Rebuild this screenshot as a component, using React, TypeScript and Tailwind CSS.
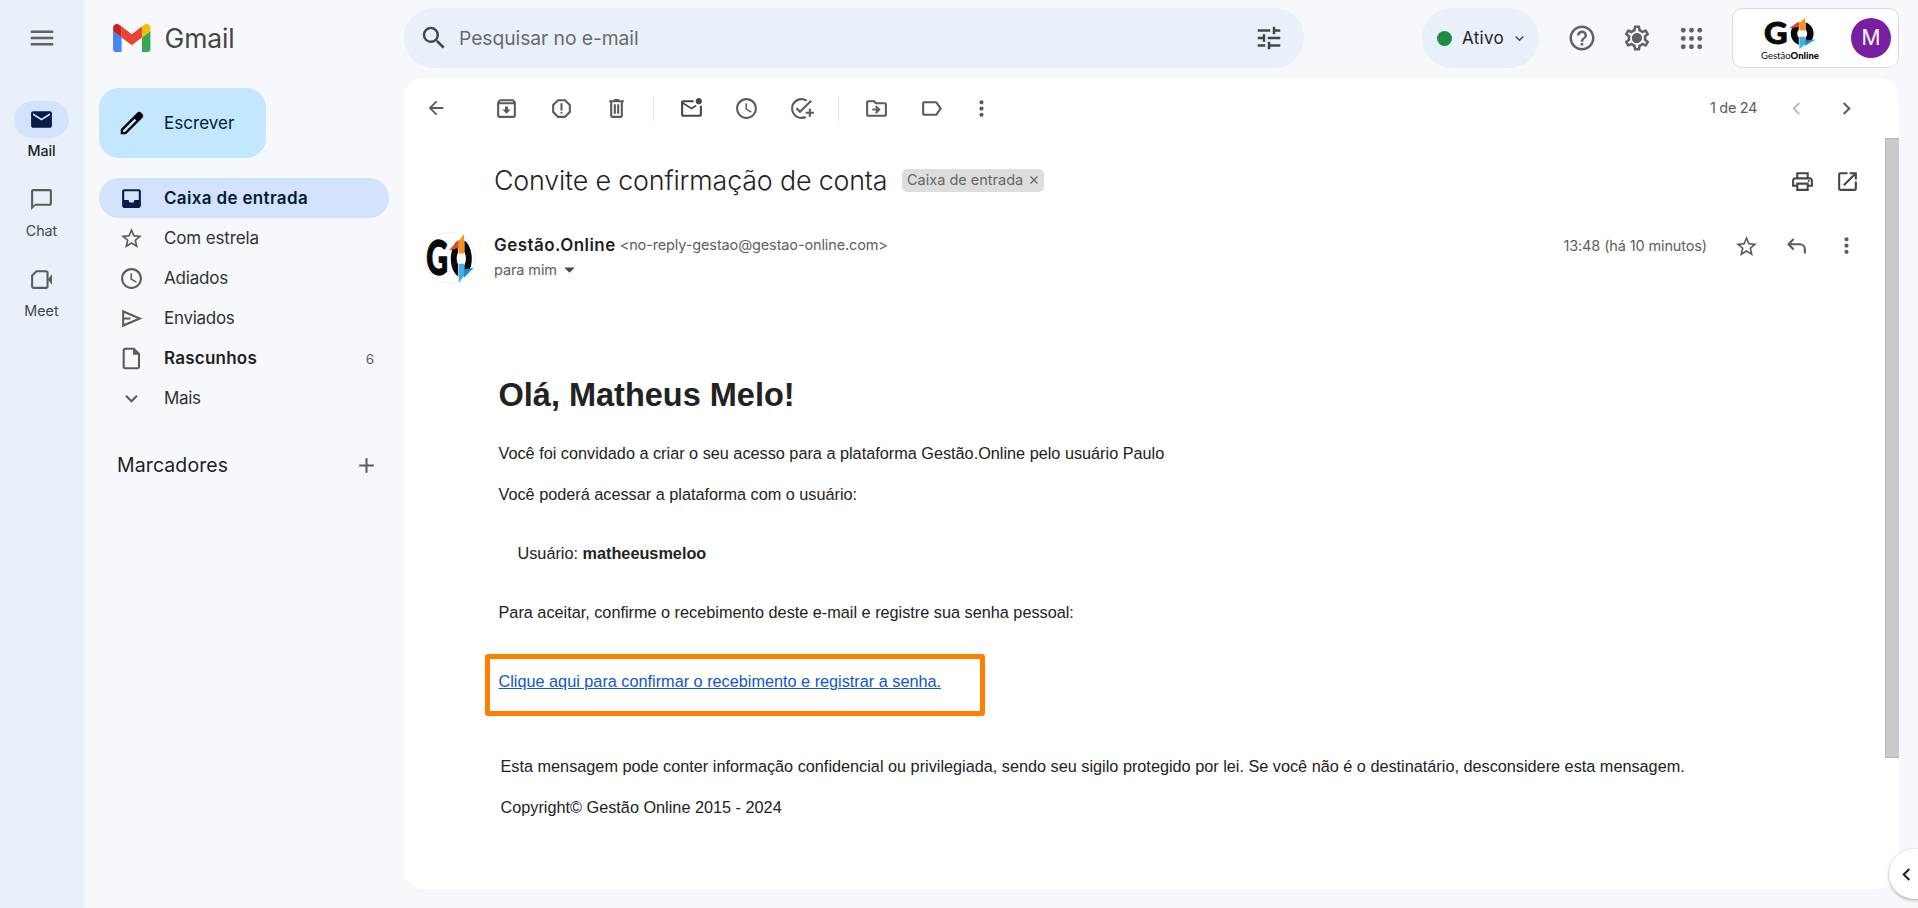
import type { ReactNode } from "react";
import {
  MdAccessTime,
  MdAdd,
  MdArrowBack,
  MdArrowDropDown,
  MdChatBubbleOutline,
  MdChevronLeft,
  MdChevronRight,
  MdExpandMore,
  MdHelpOutline,
  MdMail,
  MdMenu,
  MdMoreVert,
  MdOpenInNew,
  MdOutlineAddTask,
  MdOutlineArchive,
  MdOutlineDriveFileMove,
  MdOutlineLabel,
  MdOutlineMarkEmailUnread,
  MdOutlinePrint,
  MdOutlineReportGmailerrorred,
  MdOutlineSettings,
  MdSearch,
  MdStarBorder,
  MdTune,
} from "react-icons/md";

function GmailLogo() {
  return (
    <svg className="h-7 w-[37.5px]" viewBox="52 42 88 66">
      <path fill="#4285f4" d="M58 108h14V74L52 59v43c0 3.32 2.69 6 6 6" />
      <path fill="#34a853" d="M120 108h14c3.32 0 6-2.69 6-6V59l-20 15" />
      <path fill="#fbbc04" d="M120 48v26l20-15v-8c0-7.42-8.47-11.65-14.4-7.2" />
      <path fill="#ea4335" d="M72 74V48l24 18 24-18v26L96 92" />
      <path fill="#c5221f" d="M52 51v8l20 15V48l-5.6-4.2c-5.94-4.45-14.4-.22-14.4 7.2" />
    </svg>
  );
}

function GoMark({ className }: { className: string }) {
  return (
    <svg className={`overflow-visible ${className}`} viewBox="0 0 51 31" preserveAspectRatio="none">
      <text
        x="-0.9"
        y="26.1"
        fontFamily="Lato"
        fontWeight="900"
        fontSize="30.5"
        textLength="23.6"
        lengthAdjust="spacingAndGlyphs"
        fill="#060a0b"
        stroke="#060a0b"
        strokeWidth="0.9"
      >
        G
      </text>
      <ellipse cx="37.2" cy="15.5" rx="8.2" ry="8.6" fill="none" stroke="#060a0b" strokeWidth="6.4" />
      <path d="M33.8 0H40.6V31H33.8z" fill="#fff" />
      <path d="M34.4 3.6 23.6 10.4 34.4 8.8z" fill="#e8452c" />
      <path d="M34.4 4.4 40.2 0V12.4H34.4z" fill="#f7931e" />
      <path d="M34.4 18.8H40.2V26.6L34.4 31z" fill="#41b0e4" />
      <path d="M40.2 22.4 50.6 21.4 40.2 27.6z" fill="#1c8fd0" />
    </svg>
  );
}

function VideoIcon() {
  return (
    <svg className="h-[25px] w-[25px]" viewBox="0 0 24 24" fill="none" stroke="currentColor" strokeWidth="2">
      <path d="M7.2 4H16.2a1.6 1.6 0 0 1 1.6 1.6V18.4a1.6 1.6 0 0 1-1.6 1.6H4.6A1.6 1.6 0 0 1 3 18.4V8.2z" strokeLinejoin="round" />
      <path d="M18 12 22 7V17z" fill="currentColor" stroke="none" />
    </svg>
  );
}

function PencilIcon() {
  return (
    <svg className="h-[30px] w-[30px]" viewBox="0 0 24 24" fill="#000">
      <path d="M20.4 4.85 19.15 3.6c-.8-.8-2.05-.8-2.85 0L3 16.9V21h4.1L20.4 7.7c.8-.8.8-2.05 0-2.85zM6.3 19.1H4.9v-1.4l9.2-9.2 1.4 1.4z" />
    </svg>
  );
}

function InboxIcon() {
  return (
    <svg className="h-[25px] w-[25px]" viewBox="0 0 24 24" fill="currentColor">
      <path d="M19 3H5a2 2 0 0 0-2 2v14c0 1.1.9 2 2 2h14a2 2 0 0 0 2-2V5a2 2 0 0 0-2-2zm0 10.5h-4.2L14 15.8h-4l-.8-2.3H5V5h14z" />
    </svg>
  );
}

function SendIcon() {
  return (
    <svg className="h-[25px] w-[25px]" viewBox="0 0 24 24" fill="none" stroke="currentColor" strokeWidth="2">
      <path d="M4 5.2V18.8L20 12z" />
      <path d="M4 12H11" />
    </svg>
  );
}

function DraftIcon() {
  return (
    <svg className="h-[25px] w-[25px]" viewBox="0 0 24 24" fill="none" stroke="currentColor" strokeWidth="2">
      <path d="M5.9 2.6H14.2L19.2 7.6V20a1.4 1.4 0 0 1-1.4 1.4H5.9A1.4 1.4 0 0 1 4.5 20V4A1.4 1.4 0 0 1 5.9 2.6z" />
      <path d="M13.5 2.2V8.5H19.8z" fill="currentColor" stroke="none" />
    </svg>
  );
}

function TrashIcon() {
  return (
    <svg className="h-[25px] w-[25px]" viewBox="0 0 24 24" fill="none" stroke="currentColor" strokeWidth="2">
      <path d="M5 5H19M9.5 3.8H14.5" />
      <path d="M6.9 5V19a1 1 0 0 0 1 1H16.1a1 1 0 0 0 1-1V5" />
      <path d="M10.4 8V17M13.6 8V17" />
    </svg>
  );
}

function ReplyIcon() {
  return (
    <svg className="h-[25px] w-[25px]" viewBox="0 0 24 24" fill="none" stroke="currentColor" strokeWidth="2">
      <path d="M9.2 4.8 4.4 9.8 9.2 14.8" />
      <path d="M4.6 9.8H15.2A4.8 4.8 0 0 1 20 14.6V18.6" />
    </svg>
  );
}

function AppsIcon() {
  const steps = [4.1, 12, 19.9];
  return (
    <svg className="h-[25px] w-[25px]" viewBox="0 0 24 24" fill="currentColor">
      {steps.map((y) => steps.map((x) => <circle key={`${x}-${y}`} cx={x} cy={y} r="2.35" />))}
    </svg>
  );
}

function RailItem({ icon, label, active }: { icon: ReactNode; label: string; active?: boolean }) {
  return (
    <div className="flex h-20 flex-col items-center">
      <div
        className={
          active
            ? "flex h-[37px] w-[55px] items-center justify-center rounded-full bg-[#d3e3fd] text-[#041e49]"
            : "flex h-[37px] w-[55px] items-center justify-center text-[#5a5c5c]"
        }
      >
        {icon}
      </div>
      <div
        className={
          active
            ? "mt-1 text-[14.3px] leading-[18px] font-medium tracking-[-0.1px] text-[#1f1f1f]"
            : "mt-1 text-[14.3px] leading-[18px] text-[#444746]"
        }
      >
        {label}
      </div>
    </div>
  );
}

function NavItem({ icon, label, labelClass }: { icon: ReactNode; label: string; labelClass: string }) {
  return (
    <div className="flex h-10 items-center pl-5 text-[#5a5c5c]">
      {icon}
      <span className={`ml-5 pt-0.5 text-[17px] ${labelClass}`}>{label}</span>
    </div>
  );
}

function Cell({ children, className = "w-[55px]" }: { children: ReactNode; className?: string }) {
  return <div className={`flex shrink-0 items-center justify-center ${className}`}>{children}</div>;
}

function Divider() {
  return <div className="mr-2.5 ml-[9px] h-[25px] w-px bg-[#e3e5e8]" />;
}

export default function App() {
  return (
    <div className="relative flex h-[908px] w-[1918px] overflow-hidden bg-[#f6f8fc] font-[Inter,sans-serif] text-[#1f1f1f]">
      <aside className="flex w-[84px] shrink-0 flex-col items-center bg-[#e9f0fa] pr-px">
        <div className="flex h-[101px] items-start pt-[23px] text-[#5f6163]">
          <MdMenu size={30} />
        </div>
        <RailItem active icon={<MdMail size={25} />} label="Mail" />
        <RailItem icon={<MdChatBubbleOutline size={25} />} label="Chat" />
        <RailItem icon={<VideoIcon />} label="Meet" />
      </aside>

      <div className="flex w-80 shrink-0 flex-col pr-[15px] pl-[15px]">
        <div className="flex h-[76px] items-center pl-[14px]">
          <GmailLogo />
          <span className="ml-[14px] pt-0.5 text-[26.5px] tracking-[-0.14px] text-[#444746]">Gmail</span>
        </div>
        <div className="mt-3 flex h-[70px] w-[167px] items-center rounded-[20px] bg-[#c2e7ff] pl-[18px]">
          <PencilIcon />
          <span className="ml-[17px] pt-0.5 text-[17px] tracking-[0.05px] text-[#001d35]">Escrever</span>
        </div>
        <nav className="mt-5 flex flex-col">
          <div className="flex h-10 items-center rounded-full bg-[#d3e3fd] pl-5 text-[#041e49]">
            <InboxIcon />
            <span className="ml-5 pt-0.5 text-[17px] font-semibold tracking-[0.34px] text-[#001d35]">
              Caixa de entrada
            </span>
          </div>
          <NavItem icon={<MdStarBorder size={25} />} label="Com estrela" labelClass="tracking-[-0.15px] text-[#303234]" />
          <NavItem icon={<MdAccessTime size={25} />} label="Adiados" labelClass="tracking-[-0.2px] text-[#303234]" />
          <NavItem icon={<SendIcon />} label="Enviados" labelClass="tracking-[-0.28px] text-[#303234]" />
          <div className="flex h-10 items-center pr-[15px] pl-5 text-[#5a5c5c]">
            <DraftIcon />
            <span className="ml-5 pt-0.5 text-[17px] font-semibold tracking-[0.23px] text-[#1f1f1f]">Rascunhos</span>
            <span className="ml-auto pt-0.5 text-[13.5px]">6</span>
          </div>
          <NavItem icon={<MdExpandMore size={25} />} label="Mais" labelClass="tracking-[-0.37px] text-[#303234]" />
        </nav>
        <div className="mt-[35px] flex h-[25px] items-center justify-between pr-2.5 pl-[18px]">
          <span className="text-[19.5px] tracking-[0.1px]">Marcadores</span>
          <MdAdd size={25} className="text-[#5a5c5c]" />
        </div>
      </div>

      <div className="flex w-[1495px] shrink-0 flex-col">
        <header className="flex items-center pt-2">
          <div className="flex h-[60px] w-[900px] items-center rounded-full bg-[#e9f0fa] pr-5 pl-[15px] text-[#444746]">
            <MdSearch size={30} />
            <span className="ml-2.5 text-[19.3px] tracking-[-0.06px] text-[#686b6d]">Pesquisar no e-mail</span>
            <MdTune size={30} className="ml-auto" />
          </div>
          <div className="ml-[118px] flex h-[60px] w-[117px] items-center rounded-full bg-[#e9f0fa] pl-[15px]">
            <span className="h-[15px] w-[15px] rounded-full bg-[#1e8e3e]" />
            <span className="ml-2.5 pt-0.5 text-[17px] tracking-[0.3px]">Ativo</span>
            <MdExpandMore size={17} className="ml-[7px] text-[#444746]" />
          </div>
          <div className="ml-[15px] flex h-[60px] text-[#5f6368]">
            <Cell>
              <MdHelpOutline size={30} />
            </Cell>
            <Cell>
              <div className="relative flex">
                <MdOutlineSettings size={30} />
                <span className="absolute top-[10.5px] left-[10.5px] h-[9px] w-[9px] rounded-full bg-[#5f6368]" />
              </div>
            </Cell>
            <Cell>
              <AppsIcon />
            </Cell>
          </div>
          <div className="ml-[13px] flex h-[60px] w-[167px] items-center rounded-[10px] border border-[#dadce0] bg-white">
            <div className="ml-[27px] flex w-[60px] flex-col items-center">
              <GoMark className="mt-0.5 h-[31px] w-[51px]" />
              <div className="mt-px flex font-[Lato] text-[9.5px] leading-[11px] text-[#060a0b]">
                <span>Gestão</span>
                <span className="font-black">Online</span>
              </div>
            </div>
            <div className="ml-[31px] flex h-10 w-10 items-center justify-center rounded-full bg-[#7b1fa2] text-[21px] text-white">
              M
            </div>
          </div>
        </header>

        <main className="mt-2.5 flex h-[811px] flex-col overflow-hidden rounded-[20px] bg-white">
          <div className="flex h-[60px] shrink-0 items-center pr-7 pl-[5px] text-[#5a5c5c]">
            <Cell className="mr-[15px] w-[54px]">
              <MdArrowBack size={22} />
            </Cell>
            <Cell className="ml-px w-[55px]">
              <MdOutlineArchive size={25} />
            </Cell>
            <Cell>
              <MdOutlineReportGmailerrorred size={25} />
            </Cell>
            <Cell>
              <TrashIcon />
            </Cell>
            <Divider />
            <Cell>
              <MdOutlineMarkEmailUnread size={25} className="text-[#444746]" />
            </Cell>
            <Cell>
              <MdAccessTime size={25} />
            </Cell>
            <Cell>
              <MdOutlineAddTask size={25} />
            </Cell>
            <Divider />
            <Cell>
              <MdOutlineDriveFileMove size={25} />
            </Cell>
            <Cell className="w-[54px]">
              <MdOutlineLabel size={25} />
            </Cell>
            <Cell className="ml-px w-[45px]">
              <MdMoreVert size={25} />
            </Cell>
            <span className="mr-3.5 ml-auto text-[14.5px] tracking-[-0.35px]">1 de 24</span>
            <Cell className="w-[50px] text-[#bdbebe]">
              <MdChevronLeft size={25} />
            </Cell>
            <Cell className="w-[50px]">
              <MdChevronRight size={25} />
            </Cell>
          </div>

          <div className="flex min-h-0 flex-1">
            <div className="flex min-w-0 flex-1 flex-col">
              <div className="flex h-[86px] items-center pr-[15px] pl-[90px]">
                <h2 className="mb-0.5 text-[26.8px] leading-9 font-light tracking-[-0.155px]">
                  Convite e confirmação de conta
                </h2>
                <div className="mb-0.5 ml-auto flex h-[23px] w-[142px] items-center rounded-[5px] bg-[#ddd] pl-[5px] text-[14.5px] text-[#666]">
                  <span>Caixa de entrada</span>
                  <svg className="ml-[7px] h-2 w-2" viewBox="0 0 8 8" stroke="#666" strokeWidth="1.3">
                    <path d="M.5.5 7.5 7.5M7.5.5.5 7.5" />
                  </svg>
                </div>
                <div className="ml-[736px] flex text-[#444746]">
                  <Cell className="w-[45px]">
                    <MdOutlinePrint size={25} />
                  </Cell>
                  <Cell className="w-[45px]">
                    <MdOpenInNew size={25} />
                  </Cell>
                </div>
              </div>

              <div className="flex h-[60px] items-start pt-[9px] pr-3.5">
                <div className="w-[90px] shrink-0 pl-[21px]">
                  <div className="flex h-[50px] w-[50px] items-center justify-center rounded-full ring-1 ring-[#f1f1f1]">
                    <GoMark className="h-[49px] w-[47px]" />
                  </div>
                </div>
                <div className="flex flex-col">
                  <div className="flex h-6 items-center">
                    <span className="pt-0.5 text-[17px] font-semibold tracking-[0.45px]">Gestão.Online</span>
                    <span className="ml-1 text-[14.5px] tracking-[-0.13px] text-[#5e5e5e]">
                      &lt;no-reply-gestao@gestao-online.com&gt;
                    </span>
                  </div>
                  <div className="flex h-[25px] items-center text-[#5e5e5e]">
                    <span className="text-[14.5px] tracking-[-0.1px]">para mim</span>
                    <MdArrowDropDown size={25} className="text-[#444746]" />
                  </div>
                </div>
                <div className="ml-auto flex h-[25px] items-center text-[#5a5c5c]">
                  <span className="mr-3.5 text-[14.5px] tracking-[-0.13px] text-[#5e5e5e]">13:48 (há 10 minutos)</span>
                  <Cell className="w-[50px] pt-0.5">
                    <MdStarBorder size={25} />
                  </Cell>
                  <Cell className="w-[50px] pt-0.5">
                    <ReplyIcon />
                  </Cell>
                  <Cell className="w-[50px]">
                    <MdMoreVert size={25} />
                  </Cell>
                </div>
              </div>

              <article className="flex flex-col pt-[91px] pl-[81px] font-['Liberation_Sans',Arial,sans-serif] text-[16.25px] leading-6 text-[#222]">
                <h1 className="pl-[13.5px] text-[32.5px] leading-10 font-bold">Olá, Matheus Melo!</h1>
                <p className="mt-[26px] pl-[13.5px]">
                  Você foi convidado a criar o seu acesso para a plataforma Gestão.Online pelo usuário Paulo
                </p>
                <p className="mt-[17px] pl-[13.5px]">Você poderá acessar a plataforma com o usuário:</p>
                <p className="mt-[35px] pl-[32.5px]">
                  Usuário: <b>matheeusmeloo</b>
                </p>
                <p className="mt-[35px] pl-[13.5px]">
                  Para aceitar, confirme o recebimento deste e-mail e registre sua senha pessoal:
                </p>
                <div className="mt-[30px] h-[62px] w-[500px] rounded-[3px] border-[5px] border-[#ff8000] pt-2.5 pl-[8.5px]">
                  <a className="block text-[#1155cc] underline">
                    Clique aqui para confirmar o recebimento e registrar a senha.
                  </a>
                </div>
                <p className="mt-[38px] pl-[15.5px]">
                  Esta mensagem pode conter informação confidencial ou privilegiada, sendo seu sigilo protegido por lei. Se
                  você não é o destinatário, desconsidere esta mensagem.
                </p>
                <p className="mt-[17px] pl-[15.5px]">Copyright© Gestão Online 2015 - 2024</p>
              </article>
            </div>
            <div className="w-3.5 shrink-0">
              <div className="h-[620px] border-y border-l border-[#b3b3b3] bg-[#cacaca]" />
            </div>
          </div>
        </main>
      </div>

      <button className="absolute top-[849px] left-[1889px] flex h-[50px] w-[50px] items-center rounded-full bg-white pl-[5px] text-[#1f1f1f] shadow-[0_1px_3px_rgba(60,64,67,0.5)]">
        <MdChevronLeft size={25} />
      </button>
    </div>
  );
}
